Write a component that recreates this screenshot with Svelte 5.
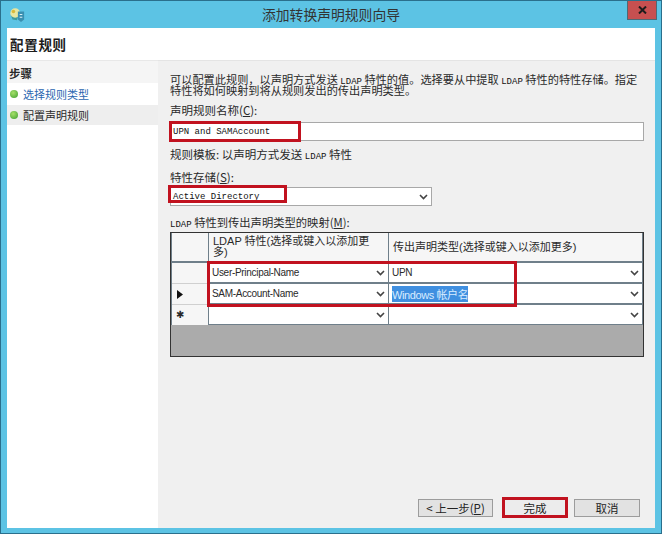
<script>
	const steps = [
		{ label: '选择规则类型', link: true },
		{ label: '配置声明规则', link: false }
	];
	const rows = [
		{ head: '', attr: 'User-Principal-Name', type: 'UPN' },
		{ head: 'current', attr: 'SAM-Account-Name', type: 'Windows 帐户名', selected: true },
		{ head: 'new', attr: '', type: '' }
	];
</script>

{#snippet chevron()}
	<svg class="chevron" width="9" height="6" viewBox="0 0 9 6"><path d="M1 1l3.5 3.5L8 1" fill="none" stroke="#444" stroke-width="1.6" /></svg>
{/snippet}

<div class="window">
	<header class="titlebar">
		<svg class="app-icon" width="16" height="16" viewBox="0 0 18 18">
			<circle cx="7" cy="7" r="5.5" fill="#e8e6a0" />
			<path d="M2 9c2 3 5 4 8 2l-1 4-5-1z" fill="#3f9a9a" />
			<path d="M10 5h7v9l-3.500 3-3.500-3z" fill="#3a8fb0" />
			<path d="M12 8h3v1h-3zM12 11h3v1h-3z" fill="#d8eef5" />
			<circle cx="5" cy="5" r="2" fill="#d9b93a" />
		</svg>
		<span class="title">添加转换声明规则向导</span>
		<button class="close" aria-label="关闭">
			<svg width="9" height="8" viewBox="0 0 9 8"><path d="M1 .5l7 7M8 .5l-7 7" stroke="#1c1c1c" stroke-width="2" /></svg>
		</button>
	</header>

	<div class="client">
		<div class="page-head">配置规则</div>
		<div class="body">
			<aside class="steps">
				<h2>步骤</h2>
				<ul>
					{#each steps as step}
						<li class:current={!step.link}>
							<span class="dot"></span>
							<span class:link={step.link}>{step.label}</span>
						</li>
					{/each}
				</ul>
			</aside>

			<main class="form">
				<div class="intro">
					<div class="intro-line">可以配置此规则，以声明方式发送 <span class="latin">LDAP</span> 特性的值。选择要从中提取 <span class="latin">LDAP</span> 特性的特性存储。指定</div>
					<div class="intro-line">特性将如何映射到将从规则发出的传出声明类型。</div>
				</div>

				<div class="label name-label">声明规则名称(<u>C</u>):</div>
				<div class="marked name-field">
					<div class="field latin">UPN and SAMAccount</div>
					<span class="mark mark-name"></span>
				</div>

				<div class="label template">规则模板: 以声明方式发送 <span class="latin">LDAP</span> 特性</div>

				<div class="label store-label">特性存储(<u>S</u>):</div>
				<div class="marked store">
					<div class="field latin">Active Directory {@render chevron()}</div>
					<span class="mark mark-store"></span>
				</div>

				<div class="label map-label"><span class="latin">LDAP</span> 特性到传出声明类型的映射(<u>M</u>):</div>
				<div class="marked map">
					<div class="grid">
						<div class="corner"></div>
						<div class="col-head">LDAP 特性(选择或键入以添加更<br />多)</div>
						<div class="col-head">传出声明类型(选择或键入以添加更多)</div>
						{#each rows as row}
							<div class="row-head">
								{#if row.head === 'current'}
									<svg width="6" height="9" viewBox="0 0 6 9"><path d="M0 0l6 4.500-6 4.500z" fill="#111" /></svg>
								{:else if row.head === 'new'}
									<span class="star">✱</span>
								{/if}
							</div>
							<div class="cell">{row.attr}{@render chevron()}</div>
							<div class="cell">
								{#if row.selected}<span class="selected">{row.type}</span>{:else}{row.type}{/if}
								{@render chevron()}
							</div>
						{/each}
						<div class="grid-empty"></div>
					</div>
					<span class="mark mark-grid"></span>
				</div>

				<div class="actions">
					<button class="back">&lt; 上一步(<u>P</u>)</button>
					<button class="finish">完成</button>
					<button>取消</button>
				</div>
			</main>
		</div>
	</div>
</div>

<style>
	:global(body) {
		margin: 0;
	}

	.window {
		width: 662px;
		height: 534px;
		box-sizing: border-box;
		display: flex;
		flex-direction: column;
		padding: 0 6px 5px;
		background: #5cc3e4;
		border: 1px solid #2a6f8c;
		font-family: "Noto Sans CJK SC", sans-serif;
		font-size: 11.5px;
		color: #2a2a2a;
		overflow: hidden;
	}

	.titlebar {
		height: 27px;
		flex: none;
		display: flex;
		align-items: center;
		justify-content: center;
		position: relative;
	}

	.title {
		font-size: 13.8px;
		color: #333;
		margin-top: -2px;
	}

	.app-icon {
		position: absolute;
		left: 2px;
		top: 6px;
	}

	.close {
		position: absolute;
		right: -2px;
		top: -1px;
		width: 30px;
		height: 20px;
		padding: 0;
		display: flex;
		align-items: center;
		justify-content: center;
		background: #c75050;
		border: 1px solid #4d6a75;
		border-top: 0;
	}

	.chevron {
		margin-left: auto;
		flex: none;
	}

	.client {
		flex: 1;
		min-height: 0;
		display: flex;
		flex-direction: column;
		background: #fff;
	}

	.page-head {
		height: 32px;
		flex: none;
		box-sizing: border-box;
		padding: 6px 0 0 3px;
		font-size: 13.5px;
		font-weight: 700;
		line-height: 20px;
		color: #1c1c1c;
		letter-spacing: 0.7px;
	}

	.body {
		flex: 1;
		min-height: 0;
		display: flex;
	}

	.steps {
		width: 151px;
		flex: none;
		background: #fff;
		border-top: 1px solid #e8e8e8;
	}

	.steps h2 {
		margin: 0;
		padding: 5px 0 0 2px;
		height: 22px;
		background: #f5f5f5;
		font-size: 11.5px;
		line-height: 15px;
		box-sizing: border-box;
		font-weight: 700;
	}

	.steps ul {
		list-style: none;
		margin: 0;
		padding: 0;
	}

	.steps li {
		height: 20px;
		display: flex;
		align-items: center;
		gap: 5px;
		padding-left: 3px;
		margin-top: 1px;
		font-size: 11px;
	}

	.steps li.current {
		background: #eeeeee;
	}

	.dot {
		width: 8px;
		height: 8px;
		border-radius: 50%;
		background: radial-gradient(circle at 40% 35%, #a6e06a, #3d9e2f);
	}

	.link {
		color: #2b66b0;
	}

	.form {
		flex: 1;
		min-width: 0;
		display: flex;
		flex-direction: column;
		background: #f0f0f0;
		padding: 0 11px 0 12px;
		border-top: 1px solid #e4e4e4;
	}

	.intro {
		margin-top: 13px;
		font-size: 11.2px;
		white-space: nowrap;
	}

	.intro-line {
		height: 11px;
		line-height: 11px;
	}

	.latin {
		font-family: "Liberation Mono", "Noto Sans CJK SC", monospace;
		font-size: 9px;
		color: #111;
	}

	.label {
		line-height: 14px;
		height: 14px;
		white-space: nowrap;
	}

	.name-label {
		margin-top: 7px;
	}

	.template {
		margin-top: 6px;
	}

	.store-label {
		margin-top: 9px;
	}

	.map-label {
		margin-top: 9px;
		font-size: 11.3px;
	}

	.marked {
		position: relative;
		margin-top: 3px;
	}

	.name-field {
		margin-top: 5px;
	}

	.store {
		width: 262px;
	}

	.field {
		height: 19px;
		box-sizing: border-box;
		display: flex;
		align-items: center;
		padding: 0 3px 0 2px;
		background: #fff;
		border: 1px solid #a8a8a8;
	}

	.mark {
		position: absolute;
		box-sizing: border-box;
		border: 3px solid #c1121f;
		pointer-events: none;
	}

	.mark-name {
		left: -1px;
		top: -1px;
		width: 132px;
		height: 21px;
	}

	.mark-store {
		left: -2px;
		top: -2px;
		width: 119px;
		height: 18px;
	}

	.mark-grid {
		left: 37px;
		top: 29px;
		width: 310px;
		height: 46px;
	}

	.grid {
		height: 125px;
		box-sizing: border-box;
		display: grid;
		grid-template-columns: 36px 179px 1fr;
		grid-template-rows: 28px 19px 19px 19px 1fr;
		gap: 2px 1px;
		padding: 0 1px;
		background: #6f7f8a;
		border: 1px solid #333;
		font-family: "Liberation Sans", "Noto Sans CJK SC", sans-serif;
		font-size: 10px;
	}

	.corner,
	.col-head,
	.row-head {
		background: #f6f6f6;
	}

	.col-head {
		display: flex;
		flex-direction: column;
		justify-content: center;
		padding: 0 4px;
		font-size: 11px;
		line-height: 11px;
		white-space: nowrap;
	}

	.col-head br {
		display: block;
	}

	.row-head {
		display: flex;
		align-items: center;
		justify-content: center;
		padding-right: 20px;
		margin-bottom: -2px;
		border-bottom: 1px solid #d0d0d0;
	}

	.star {
		font-size: 10px;
		line-height: 10px;
	}

	.cell {
		background: #fff;
		display: flex;
		align-items: center;
		padding: 0 3px;
		white-space: nowrap;
		letter-spacing: -0.3px;
	}

	.selected {
		background: #3f8fe0;
		color: #d8ecff;
		font-size: 11px;
		letter-spacing: -0.4px;
	}

	.grid-empty {
		grid-column: 1 / -1;
		background: #ababab;
		margin: -1px -1px 0;
	}

	.actions {
		margin-top: auto;
		margin-bottom: 10px;
		display: flex;
		align-items: center;
		justify-content: flex-end;
		gap: 6px;
		padding-right: 4px;
	}

	.actions button {
		width: 66px;
		height: 18px;
		padding: 0;
		box-sizing: border-box;
		font: inherit;
		line-height: 14px;
		color: #222;
		background: #e2e2e2;
		border: 1px solid #9c9c9c;
	}

	.actions .back {
		width: 75px;
		margin-right: 3px;
	}

	.actions .finish {
		height: 21px;
		border: 3px solid #c1121f;
		background: #ececec;
	}
</style>
